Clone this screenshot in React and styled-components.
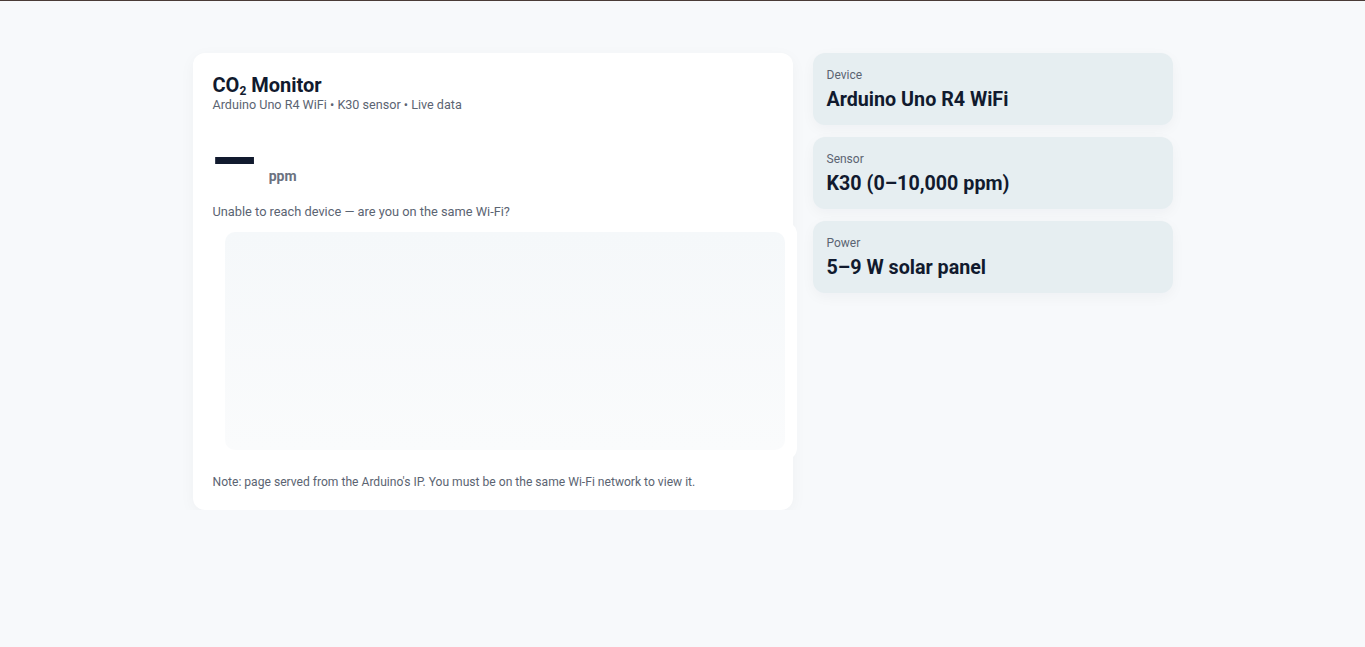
import React from "react";
import styled, { createGlobalStyle } from "styled-components";

const GlobalStyle = createGlobalStyle`
  html {
    border-top: 1px solid #4a3b37;
    background: #f7f9fb;
  }
  body {
    margin: 0;
    background: #f7f9fb;
    font-family: Roboto, "Noto Sans", sans-serif;
    color: #0f172a;
  }
`;

const specs = [
  { label: "Device", value: "Arduino Uno R4 WiFi" },
  { label: "Sensor", value: "K30 (0–10,000 ppm)" },
  { label: "Power", value: "5–9 W solar panel" },
];

export default function App() {
  return (
    <>
      <GlobalStyle />
      <Page>
        <MainCard>
          <Title>
            CO<sub>2</sub> Monitor
          </Title>
          <Subtitle>Arduino Uno R4 WiFi • K30 sensor • Live data</Subtitle>
          <Reading>
            <Value>—</Value>
            <Unit>ppm</Unit>
          </Reading>
          <Status>Unable to reach device — are you on the same Wi-Fi?</Status>
          <ChartWrap>
            <ChartArea />
          </ChartWrap>
          <Note>
            Note: page served from the Arduino's IP. You must be on the same
            Wi-Fi network to view it.
          </Note>
        </MainCard>
        <Side>
          {specs.map((s) => (
            <SpecCard key={s.label}>
              <SpecLabel>{s.label}</SpecLabel>
              <SpecValue>{s.value}</SpecValue>
            </SpecCard>
          ))}
        </Side>
      </Page>
    </>
  );
}

const Page = styled.div`
  max-width: 980px;
  margin: 52px auto 0;
  display: grid;
  grid-template-columns: 600px 360px;
  gap: 20px;
  align-items: start;
`;

const MainCard = styled.section`
  background: #fff;
  border-radius: 12px;
  padding: 20px;
  box-shadow: 0 4px 16px rgba(15, 23, 42, 0.04);
`;

const Title = styled.h1`
  margin: 0;
  font-size: 20px;
  font-weight: 700;
  line-height: 24px;
  color: #111a2e;
  sub {
    font-size: 12px;
    vertical-align: -3px;
    line-height: 0;
  }
`;

const Subtitle = styled.div`
  font-size: 12.6px;
  color: #5b6472;
  line-height: 16px;
`;

const Reading = styled.div`
  display: flex;
  align-items: baseline;
  gap: 13px;
  margin-top: 21px;
`;

const Value = styled.div`
  font-size: 57px;
  font-weight: 800;
  line-height: 56px;
  color: #111a2e;
`;

const Unit = styled.div`
  font-size: 14px;
  font-weight: 700;
  color: #6b7280;
`;

const Status = styled.div`
  margin-top: 13px;
  font-size: 12.8px;
  color: #5b6472;
  line-height: 18px;
`;

const ChartWrap = styled.div`
  width: 100%;
  box-sizing: content-box;
  margin-top: 1px;
  padding: 10px 12px;
  background: #fff;
  border-radius: 12px;
`;

const ChartArea = styled.div`
  height: 218px;
  border-radius: 10px;
  background: linear-gradient(#f5f8fa, #fafbfc);
`;

const Note = styled.div`
  margin-top: 14px;
  font-size: 12.1px;
  color: #5b6472;
  line-height: 16px;
`;

const Side = styled.aside`
  display: flex;
  flex-direction: column;
  gap: 12px;
`;

const SpecCard = styled.div`
  background: #e6eef1;
  border-radius: 12px;
  padding: 14px;
  height: 72px;
  box-sizing: border-box;
  box-shadow: 0 4px 14px rgba(15, 23, 42, 0.04);
`;

const SpecLabel = styled.div`
  font-size: 12px;
  color: #5b6472;
  line-height: 16px;
`;

const SpecValue = styled.div`
  margin-top: 4px;
  font-size: 19.7px;
  font-weight: 700;
  line-height: 26px;
  color: #111a2e;
`;
